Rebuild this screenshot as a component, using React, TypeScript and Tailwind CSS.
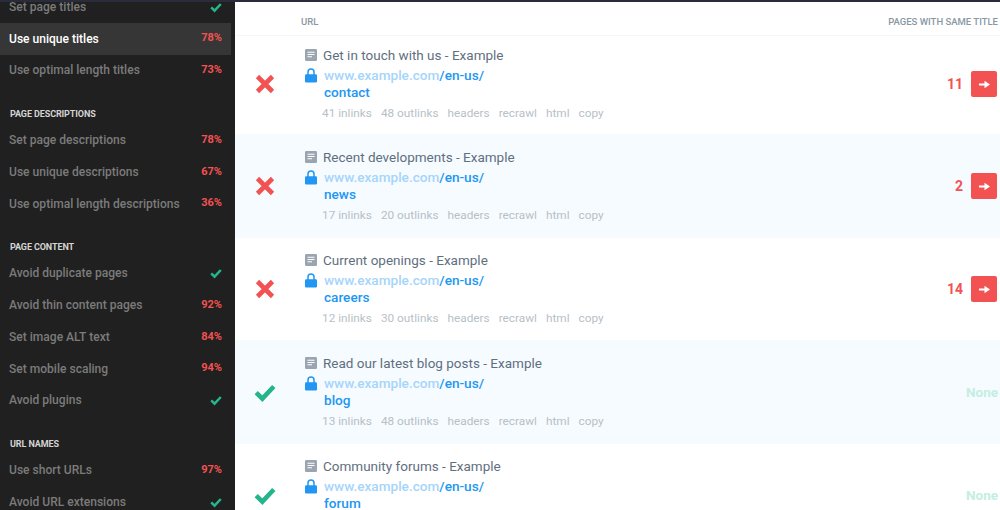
import React from 'react';

type NavItem = { label: string; score?: string; active?: boolean };
type NavGroup = { title?: string; items: NavItem[] };

const groups: NavGroup[] = [
  {
    items: [
      { label: 'Set page titles' },
      { label: 'Use unique titles', score: '78%', active: true },
      { label: 'Use optimal length titles', score: '73%' },
    ],
  },
  {
    title: 'PAGE DESCRIPTIONS',
    items: [
      { label: 'Set page descriptions', score: '78%' },
      { label: 'Use unique descriptions', score: '67%' },
      { label: 'Use optimal length descriptions', score: '36%' },
    ],
  },
  {
    title: 'PAGE CONTENT',
    items: [
      { label: 'Avoid duplicate pages' },
      { label: 'Avoid thin content pages', score: '92%' },
      { label: 'Set image ALT text', score: '84%' },
      { label: 'Set mobile scaling', score: '94%' },
      { label: 'Avoid plugins' },
    ],
  },
  {
    title: 'URL NAMES',
    items: [
      { label: 'Use short URLs', score: '97%' },
      { label: 'Avoid URL extensions' },
    ],
  },
];

type Row = {
  title: string;
  slug: string;
  inlinks: number;
  outlinks: number;
  count?: number;
  height: string;
  tinted?: boolean;
};

const rows: Row[] = [
  { title: 'Get in touch with us - Example', slug: 'contact', inlinks: 41, outlinks: 48, count: 11, height: 'h-[98px] pb-[2px]' },
  { title: 'Recent developments - Example', slug: 'news', inlinks: 17, outlinks: 20, count: 2, height: 'h-[104px]', tinted: true },
  { title: 'Current openings - Example', slug: 'careers', inlinks: 12, outlinks: 30, count: 14, height: 'h-[102px]' },
  { title: 'Read our latest blog posts - Example', slug: 'blog', inlinks: 13, outlinks: 48, height: 'h-[104px]', tinted: true },
  { title: 'Community forums - Example', slug: 'forum', inlinks: 21, outlinks: 48, height: 'h-[102px]' },
];

function Check({ size, className }: { size: number; className: string }) {
  return (
    <svg width={size} height={size} viewBox="0 0 20 20" className={className}>
      <path d="M2 10.5 L7.6 16 L18 5" fill="none" stroke="currentColor" strokeWidth="4.2" />
    </svg>
  );
}

function Cross() {
  return (
    <svg width="20" height="20" viewBox="0 0 20 20" className="text-[#f25252]">
      <path d="M2.5 2.5 L17.5 17.5 M17.5 2.5 L2.5 17.5" fill="none" stroke="currentColor" strokeWidth="4.6" />
    </svg>
  );
}

function PageIcon() {
  return (
    <svg width="12" height="12" viewBox="0 0 12 12" className="shrink-0">
      <rect width="12" height="12" rx="1.2" fill="#9aa5b1" />
      <path d="M2.5 3.2 H9.5 M2.5 5.5 H9.5 M2.5 7.8 H7" stroke="#fff" strokeWidth="1.1" />
    </svg>
  );
}

function LockIcon() {
  return (
    <svg width="12" height="15" viewBox="0 0 12 15" className="shrink-0">
      <path d="M3 7 V4 a3 3 0 0 1 6 0 V7" fill="none" stroke="#2196f3" strokeWidth="1.5" />
      <rect y="6.2" width="12" height="8.3" rx="1.2" fill="#2196f3" />
    </svg>
  );
}

function Sidebar() {
  return (
    <aside className="w-[235px] shrink-0 bg-[#202020] pr-1 -mt-[11px]">
      {groups.map((group, i) => (
        <div key={i} className={i === 0 ? '' : 'mt-[19px]'}>
          {group.title && (
            <div className="h-[19px] pl-[10px] flex items-center text-[9px] font-bold text-[#d4d4d4] tracking-[-0.1px]">
              {group.title}
            </div>
          )}
          {group.items.map((item) => (
            <div
              key={item.label}
              className={`h-[31.75px] pl-[9px] pr-[9px] flex items-center justify-between text-[12.05px] font-medium ${
                item.active ? 'bg-[#363636] text-white' : 'text-[#7b7b7b]'
              }`}
            >
              <span>{item.label}</span>
              {item.score ? (
                <span className="text-[11px] font-bold text-[#f25252]">{item.score}</span>
              ) : (
                <Check size={12} className="text-[#26b48c]" />
              )}
            </div>
          ))}
        </div>
      ))}
    </aside>
  );
}

function ResultRow({ row }: { row: Row }) {
  const failed = row.count !== undefined;
  return (
    <div className={`${row.height} flex items-center shrink-0 ${row.tinted ? 'bg-[#f6fbff]' : 'bg-white'}`}>
      <div className="w-[70px] pr-[10px] flex justify-center shrink-0">
        {failed ? <Cross /> : <Check size={22} className="text-[#26b48c]" />}
      </div>
      <div className="flex-1 min-w-0">
        <div className="flex items-center gap-[6px] h-[20px]">
          <PageIcon />
          <span className="text-[13.5px] text-[#5f6f80]">{row.title}</span>
        </div>
        <div className="flex mt-[2px]">
          <div className="w-[19px] shrink-0 pt-[1px]">
            <LockIcon />
          </div>
          <div className="text-[13.6px] font-medium leading-[17.5px]">
            <div>
              <span className="text-[#a6d5fa]">www.example.com</span>
              <span className="text-[#2196f3]">/en-us/</span>
            </div>
            <div className="text-[#2196f3]">{row.slug}</div>
          </div>
        </div>
        <div className="flex gap-[9px] ml-[17px] mt-[3.5px] text-[11.8px] text-[#b7bfc7]">
          <span>{row.inlinks} inlinks</span>
          <span>{row.outlinks} outlinks</span>
          <span>headers</span>
          <span>recrawl</span>
          <span>html</span>
          <span>copy</span>
        </div>
      </div>
      <div className="flex items-center gap-[8px] pr-[3px] shrink-0">
        {failed ? (
          <>
            <span className="text-[14px] font-bold text-[#f25252]">{row.count}</span>
            <div className="w-[26px] h-[26px] rounded-[2px] bg-[#f25252] flex items-center justify-center">
              <svg width="11" height="9" viewBox="0 0 11 9">
                <path d="M0 3.4 H5.5 V0.8 L11 4.5 L5.5 8.2 V5.6 H0 Z" fill="#fff" />
              </svg>
            </div>
          </>
        ) : (
          <span className="text-[13.5px] font-bold text-[#c3eee2] -mr-px">None</span>
        )}
      </div>
    </div>
  );
}

export default function App() {
  return (
    <div className="flex flex-col w-[1000px] h-[510px] overflow-hidden bg-white font-['Roboto',sans-serif]">
      <div className="h-[2px] bg-[#2a2c3c] shrink-0 relative z-10" />
      <div className="flex flex-1 min-h-0">
        <Sidebar />
        <main className="flex-1 min-w-0 flex flex-col">
          <div className="h-[34px] shrink-0 pt-[8px] flex items-center justify-between pl-[66px] pr-[2px] text-[9.5px] font-medium text-[#8996a3] border-b border-[#f5f7f9]">
            <span>URL</span>
            <span>PAGES WITH SAME TITLE</span>
          </div>
          {rows.map((row) => (
            <ResultRow key={row.slug} row={row} />
          ))}
        </main>
      </div>
    </div>
  );
}
